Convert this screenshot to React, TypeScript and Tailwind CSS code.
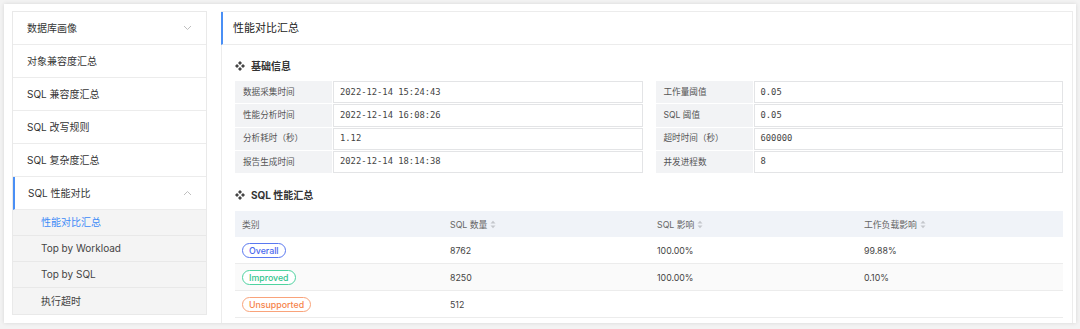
import React from "react";

const FONT = { fontFamily: '"Inter", "Noto Sans CJK SC", sans-serif' };
const MONO = { fontFamily: '"DejaVu Sans Mono", "Liberation Mono", monospace' };

function Chevron({ up }: { up?: boolean }) {
  return (
    <svg width="9" height="6" viewBox="0 0 9 6" className="shrink-0">
      <path
        d={up ? "M1 5 L4.5 1.5 L8 5" : "M1 1 L4.5 4.5 L8 1"}
        fill="none"
        stroke="#b8b8b8"
        strokeWidth="0.9"
      />
    </svg>
  );
}

function Diamonds() {
  return (
    <svg width="10" height="10" viewBox="0 0 10 10" className="shrink-0">
      <path d="M5 0 L7 2 L5 4 L3 2 Z" fill="#444" />
      <path d="M5 6 L7 8 L5 10 L3 8 Z" fill="#444" />
      <path d="M0 5 L2 3 L4 5 L2 7 Z" fill="#444" />
      <path d="M6 5 L8 3 L10 5 L8 7 Z" fill="#444" />
    </svg>
  );
}

function SortIcon() {
  return (
    <svg width="6" height="9" viewBox="0 0 6 9" className="ml-[3px] shrink-0">
      <path d="M0.5 3.6 L3 0.8 L5.5 3.6 Z" fill="#c4c7cc" />
      <path d="M0.5 5.4 L3 8.2 L5.5 5.4 Z" fill="#c4c7cc" />
    </svg>
  );
}

const mainItems = ["数据库画像", "对象兼容度汇总", "SQL 兼容度汇总", "SQL 改写规则", "SQL 复杂度汇总"];
const subItems = ["性能对比汇总", "Top by Workload", "Top by SQL", "执行超时"];

const leftKV = [
  ["数据采集时间", "2022-12-14 15:24:43"],
  ["性能分析时间", "2022-12-14 16:08:26"],
  ["分析耗时（秒）", "1.12"],
  ["报告生成时间", "2022-12-14 18:14:38"],
];
const rightKV = [
  ["工作量阈值", "0.05"],
  ["SQL 阈值", "0.05"],
  ["超时时间（秒）", "600000"],
  ["并发进程数", "8"],
];

function KVTable({ rows }: { rows: string[][] }) {
  return (
    <div className="flex-1 flex flex-col gap-[1px]">
      {rows.map(([k, v]) => (
        <div key={k} className="flex h-[22.3px] gap-[1px]">
          <div className="w-[97px] bg-[#f2f3f5] flex items-center pl-[8px] text-[8.6px] text-[#555]">{k}</div>
          <div
            className="flex-1 border border-[#e3e4e6] bg-white flex items-center pl-[6px] text-[8.8px] text-[#444]"
            style={MONO}
          >
            {v}
          </div>
        </div>
      ))}
    </div>
  );
}

const rows = [
  { tag: "Overall", cls: "border-[#5a78f0] text-[#4a68ee]", n: "8762", s: "100.00%", w: "99.88%", bg: "bg-white" },
  { tag: "Improved", cls: "border-[#4fd3a0] text-[#34c48e]", n: "8250", s: "100.00%", w: "0.10%", bg: "bg-[#fafafa]" },
  { tag: "Unsupported", cls: "border-[#f9a37a] text-[#f6834a]", n: "512", s: "", w: "", bg: "bg-white" },
];

export default function App() {
  return (
    <div className="w-[1080px] h-[329px] bg-[#f3f3f3] p-[4px] overflow-hidden" style={FONT}>
      <div className="h-[319px] bg-white shadow-[0_0_4px_rgba(0,0,0,0.12)] flex pt-[7px] pl-[8px] pr-[3px] gap-[14px] overflow-hidden">
        {/* Sidebar */}
        <div className="w-[195px] shrink-0 self-start border border-[#e9e9e9] flex flex-col">
          {mainItems.map((t, i) => (
            <div
              key={t}
              className="h-[33px] border-b border-[#ececec] flex items-center justify-between pl-[14px] pr-[14px] text-[10px] text-[#333]"
            >
              <span>{t}</span>
              {i === 0 && <Chevron />}
            </div>
          ))}
          <div className="h-[33px] border-b border-[#ececec] flex items-center justify-between pl-[13px] pr-[14px] text-[10px] text-[#333] border-l-2 border-l-[#4a8ff5]">
            <span>SQL 性能对比</span>
            <Chevron up />
          </div>
          {subItems.map((t, i) => (
            <div
              key={t}
              className={`h-[26px] bg-[#f4f4f4] flex items-center pl-[28px] text-[10px] ${
                i < subItems.length - 1 ? "border-b border-[#e8e8e8]" : ""
              } ${i === 0 ? "text-[#3d8af7]" : "text-[#444]"}`}
            >
              {t}
            </div>
          ))}
        </div>

        {/* Main panel */}
        <div className="flex-1 border border-[#ececec] flex flex-col h-[330px]">
          <div className="h-[33px] shrink-0 border-b border-[#ececec] border-l-2 border-l-[#4a8ff5] -ml-[1px] flex items-center pl-[10px] text-[11px] text-[#222]">
            性能对比汇总
          </div>
          <div className="pl-[13px] pr-[9px] pt-[15px] flex flex-col">
            <div className="flex items-center gap-[6px] h-[12px] text-[10px] font-bold text-[#333]">
              <Diamonds />
              <span>基础信息</span>
            </div>
            <div className="flex gap-[13px] mt-[9px]">
              <KVTable rows={leftKV} />
              <KVTable rows={rightKV} />
            </div>
            <div className="flex items-center gap-[6px] h-[12px] mt-[16px] text-[10px] font-bold text-[#333]">
              <Diamonds />
              <span>SQL 性能汇总</span>
            </div>
            <div className="mt-[10px] flex flex-col">
              <div className="h-[26px] bg-[#f0f3f8] grid grid-cols-4 items-center text-[8.8px] text-[#666]">
                <div className="pl-[7px]">类别</div>
                <div className="pl-[8px] flex items-center">SQL 数量<SortIcon /></div>
                <div className="pl-[8px] flex items-center">SQL 影响<SortIcon /></div>
                <div className="pl-[8px] flex items-center">工作负载影响<SortIcon /></div>
              </div>
              {rows.map((r) => (
                <div
                  key={r.tag}
                  className={`h-[27px] ${r.bg} border-b border-[#ececec] grid grid-cols-4 items-center text-[8.8px] text-[#444]`}
                >
                  <div className="pl-[7px]">
                    <span
                      className={`inline-flex items-center h-[15px] px-[6px] rounded-full border bg-white text-[8.8px] font-medium ${r.cls}`}
                    >
                      {r.tag}
                    </span>
                  </div>
                  <div className="pl-[8px]">{r.n}</div>
                  <div className="pl-[8px]">{r.s}</div>
                  <div className="pl-[8px]">{r.w}</div>
                </div>
              ))}
            </div>
          </div>
        </div>
      </div>
    </div>
  );
}
